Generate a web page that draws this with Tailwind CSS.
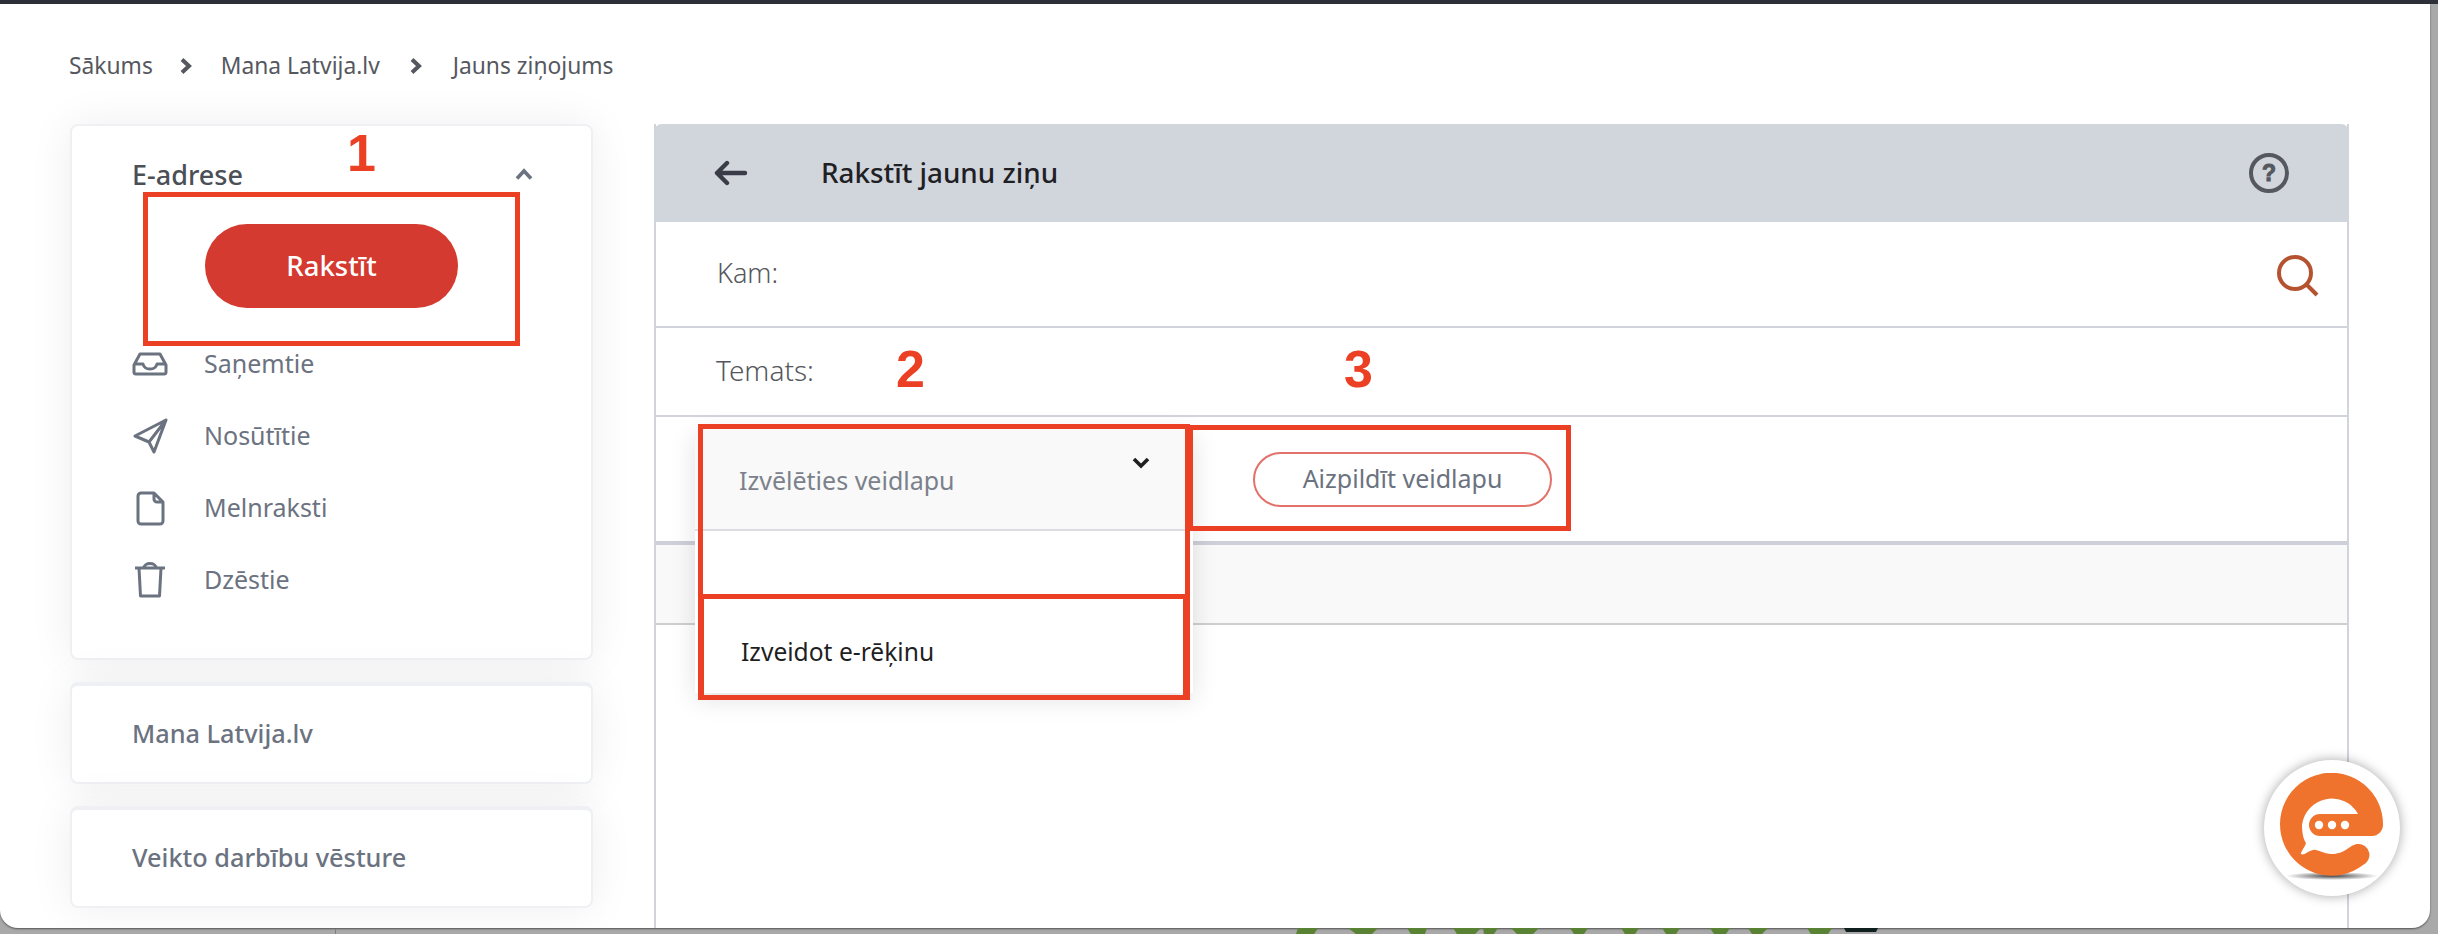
<!DOCTYPE html>
<html lang="lv">
<head>
  <meta charset="UTF-8" />
  <meta name="viewport" content="width=device-width, initial-scale=1.0" />
  <title>Jauns ziņojums</title>
  <script src="https://cdn.jsdelivr.net/npm/@tailwindcss/browser@4"></script>
</head>
<body class="bg-[#a9a9a9] font-['Noto_Sans',sans-serif]">
  <div class="relative w-[2438px] h-[934px] overflow-hidden">
    <!-- Logu josla -->
    <div class="h-1 bg-[#2e3039]"></div>

    <div class="w-[2430px] h-[924px] bg-white rounded-b-[18px] shadow-[0_1px_2px_rgba(0,0,0,0.5)] pl-[69px] pt-[46px] overflow-hidden">
      <!-- Breadcrumb -->
      <nav class="h-[32px] flex items-center text-[22.8px] text-[#55585e]">
        <span>Sākums</span>
        <svg class="w-[12px] h-[16px] ml-[27px] mr-[29px]" viewBox="0 0 12 16" fill="none" stroke="currentColor" stroke-width="4"><path d="M2 1.5 9 8l-7 6.5" /></svg>
        <span>Mana Latvija.lv</span>
        <svg class="w-[12px] h-[16px] ml-[30px] mr-[31px]" viewBox="0 0 12 16" fill="none" stroke="currentColor" stroke-width="4"><path d="M2 1.5 9 8l-7 6.5" /></svg>
        <span>Jauns ziņojums</span>
      </nav>

      <div class="flex mt-[42px] ml-[1px] gap-[61px]">
        <!-- Sānu josla -->
        <aside class="w-[523px] flex flex-col gap-[22px]">
          <section class="h-[536px] bg-white border-2 border-[#eef0f3] rounded-[8px] shadow-[0_0_44px_rgba(0,0,0,0.07)] pl-[60px] pr-[58px]">
            <div class="h-[98px] pt-[30px] flex items-start justify-between text-[#4b4f56]">
              <span class="text-[27px] leading-[38px] font-medium">E-adrese</span>
              <svg class="w-[18px] h-[12px] mt-[12px]" viewBox="0 0 18 12" fill="none" stroke="#6b7280" stroke-width="3.6"><path d="M2 10.5 9 3l7 7.5" /></svg>
            </div>
            <button class="block ml-[73px] w-[253px] h-[84px] rounded-full bg-[#d43a2f] text-white text-[27.5px] font-medium">Rakstīt</button>
            <ul class="mt-[20px] flex flex-col text-[25px] text-[#6b7280]">
              <li class="h-[72px] flex items-center gap-[36px]">
                <svg class="w-[36px] h-[24px]" viewBox="0 0 36 24" fill="none" stroke="currentColor" stroke-width="3" stroke-linejoin="round"><path d="M8 2h20l6 11v7a2 2 0 0 1-2 2H4a2 2 0 0 1-2-2v-7zM2 12h9c1 4 4 5 7 5s6-1 7-5h9" /></svg>
                <span>Saņemtie</span>
              </li>
              <li class="h-[72px] flex items-center gap-[36px]">
                <svg class="w-[36px] h-[36px]" viewBox="0 0 36 36" fill="none" stroke="currentColor" stroke-width="3" stroke-linejoin="round"><path d="M34 2 3 18l14 6 5 10zM34 2 17 24" /></svg>
                <span>Nosūtītie</span>
              </li>
              <li class="h-[72px] flex items-center gap-[36px]">
                <svg class="w-[36px] h-[36px]" viewBox="0 0 36 36" fill="none" stroke="currentColor" stroke-width="3" stroke-linejoin="round"><path d="M9 3h13l9 9v19a3 3 0 0 1-3 3H9a3 3 0 0 1-3-3V6a3 3 0 0 1 3-3zM22 3v6a3 3 0 0 0 3 3h6" /></svg>
                <span>Melnraksti</span>
              </li>
              <li class="h-[72px] flex items-center gap-[36px]">
                <svg class="w-[36px] h-[38px]" viewBox="0 0 36 38" fill="none" stroke="currentColor" stroke-width="3" stroke-linejoin="round"><path d="M3 7h30M12 7c0-6 12-6 12 0M7 7l1.500 28h19L29 7" /></svg>
                <span>Dzēstie</span>
              </li>
            </ul>
          </section>
          <section class="h-[102px] bg-white border-2 border-t-4 border-[#eef0f3] rounded-[8px] shadow-[0_0_44px_rgba(0,0,0,0.07)] pl-[60px] flex items-center text-[25.3px] font-medium text-[#6b7280]">Mana Latvija.lv</section>
          <section class="h-[102px] bg-white border-2 border-t-4 border-[#eef0f3] rounded-[8px] shadow-[0_0_44px_rgba(0,0,0,0.07)] pl-[60px] flex items-center text-[25.3px] font-medium text-[#6b7280]">Veikto darbību vēsture</section>
        </aside>

        <!-- Ziņas forma -->
        <main class="w-[1695px] h-[820px] border-x-2 border-[#d1d5db]">
          <header class="-mx-[2px] h-[98px] bg-[#d1d5dc] rounded-t-[8px] flex items-center pl-[60px] pr-[59px]">
            <svg class="w-[34px] h-[26px]" viewBox="0 0 34 26" fill="none" stroke="#3a3d47" stroke-width="4.4" stroke-linecap="round" stroke-linejoin="round"><path d="M3 13h28M13 3 3 13l10 10" /></svg>
            <h1 class="ml-[73px] text-[27.800px] font-medium text-[#1f2024]">Rakstīt jaunu ziņu</h1>
            <svg class="ml-auto w-[42px] h-[42px]" viewBox="0 0 42 42" fill="none"><circle cx="21" cy="21" r="18" stroke="#55585f" stroke-width="4" /><text x="21" y="29" text-anchor="middle" font-size="23" font-weight="700" fill="#55585f" stroke="#55585f" stroke-width="1" font-family="Liberation Sans">?</text></svg>
          </header>
          <div class="h-[106px] border-b-2 border-[#d1d5db] relative flex items-center pl-[61px] text-[27px] font-light text-[#55575c]">
            <span class="-mt-[2px]">Kam:</span>
            <svg class="absolute right-[28px] top-[33px] w-[42px] h-[42px]" viewBox="0 0 42 42" fill="none" stroke="#b5522f" stroke-width="4"><circle cx="18" cy="18" r="16" /><path d="m29 29 11 11" /></svg>
          </div>
          <div class="h-[89px] border-b-2 border-[#d1d5db] flex items-center pl-[60px] text-[28px] font-light text-[#55575c]">
            <span class="-mt-[4px]">Temats:</span>
          </div>
          <div class="h-[128px] border-b-4 border-[#cdd0d9] flex items-center pl-[597px]">
            <button class="w-[299px] h-[55px] rounded-full border-2 border-[#e27169] text-[25px] text-[#6b7280]">Aizpildīt veidlapu</button>
          </div>
          <div class="h-[80px] bg-[#f9f9f9] border-b-2 border-[#cfcfcf]"></div>
        </main>
      </div>
    </div>

    <!-- Atvērtais izvēlnes bloks -->
    <div class="absolute left-[695px] top-[429px] w-[498px] h-[264px] bg-white shadow-[0_6px_24px_rgba(0,0,0,0.12)]">
      <div class="h-[102px] bg-[#f9f9f9] border-b-2 border-[#dcdde1] flex items-center pl-[44px] pr-[43px] justify-between">
        <span class="text-[25px] text-[#7b818b] mt-[4px]">Izvēlēties veidlapu</span>
        <svg class="w-[18px] h-[12px] -mt-[32px]" viewBox="0 0 18 12" fill="none" stroke="#1f1f1f" stroke-width="3.6"><path d="m2 2 7 7 7-7" /></svg>
      </div>
      <div class="pt-[102px] pl-[46px] text-[24.600px] leading-[38px] text-[#1f1f1f]">Izveidot e-rēķinu</div>
    </div>

    <!-- Anotācijas -->
    <div class="absolute left-[143px] top-[192px] w-[377px] h-[154px] border-[5px] border-[#ec4024]"></div>
    <div class="absolute left-[698px] top-[424px] w-[492px] h-[175px] border-[5px] border-[#ec4024]"></div>
    <div class="absolute left-[698px] top-[594px] w-[492px] h-[106px] border-[5px] border-r-[7px] border-l-[6px] border-[#ec4024]"></div>
    <div class="absolute left-[1188px] top-[425px] w-[383px] h-[106px] border-[5px] border-[#ec4024]"></div>
    <span class="absolute left-[347px] top-[123px] text-[52px] leading-[60px] font-bold text-[#ec4024] font-['Liberation_Sans',sans-serif]">1</span>
    <span class="absolute left-[896px] top-[339px] text-[52px] leading-[60px] font-bold text-[#ec4024] font-['Liberation_Sans',sans-serif]">2</span>
    <span class="absolute left-[1344px] top-[339px] text-[52px] leading-[60px] font-bold text-[#ec4024] font-['Liberation_Sans',sans-serif]">3</span>

    <!-- Čata poga -->
    <div class="absolute left-[2264px] top-[760px] w-[136px] h-[136px] rounded-full bg-white shadow-[0_0_12px_rgba(0,0,0,0.35)] flex items-center justify-center">
      <svg class="w-[104px] h-[112px] mt-[1px]" viewBox="0 0 104 112" fill="none">
        <defs>
          <radialGradient id="ena"><stop offset="0" stop-color="#444" /><stop offset="1" stop-color="#444" stop-opacity="0" /></radialGradient>
        </defs>
        <ellipse cx="52" cy="103" rx="46" ry="4" fill="url(#ena)" />
        <path fill="#f0732d" d="M103 52A51.5 51.5 0 1 0 83 92A11 11 0 0 0 78 71C70 71 66 81 52 81C42 81 38 76 33 77C28 78 24 83 21 81C20 80 25 74 26 70C23 66 22 58 22 52A30 30 0 0 1 78 41H40A11 11 0 0 0 40 63H92C98 63 103 58 103 52Z" />
        <circle cx="39" cy="52" r="4.2" fill="#fff" /><circle cx="52" cy="52" r="4.2" fill="#fff" /><circle cx="65" cy="52" r="4.2" fill="#fff" />
      </svg>
    </div>

    <!-- Fona loga mala apakšā -->
    <svg class="absolute left-[1290px] top-[928px] w-[600px] h-[6px]" viewBox="0 0 600 6" fill="#5a8234">
      <path d="M8 0h20l-4 6H6zM58 0h30l-6 6H66zM117 0h20l-2 6h-14zM163 0h28l-6 6h-18zM193 0h15l-4 6h-10zM221 0h28l-6 6h-16zM280 0h18l-4 6h-10zM331 0h18l-4 6h-10zM372 0h18l-4 6h-10zM420 0h20l-4 6h-12zM458 0h20l-6 6h-10zM517 0h25l-4 6h-17z" />
      <path fill="#10201f" d="M554 0h34l-2 4h-30z" />
    </svg>
    <div class="absolute left-[335px] top-[929px] w-px h-[5px] bg-[#7d7d7d]"></div>
  </div>
</body>
</html>
